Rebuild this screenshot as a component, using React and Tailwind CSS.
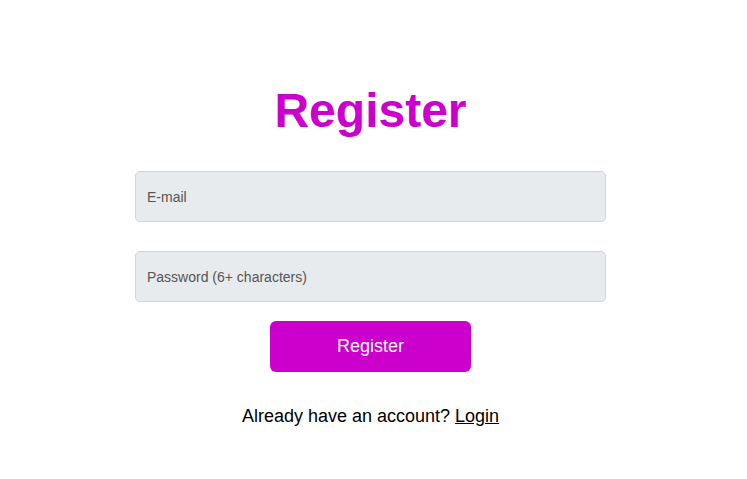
export default function App() {
  return (
    <div className="min-h-[479px] w-full bg-white" style={{ fontFamily: '"Liberation Sans", Arial, sans-serif' }}>
      <div className="ml-[135px] flex w-[471px] flex-col items-center pt-[87px]">
        <h1 className="text-[48px] font-bold leading-[48px] text-[#cc00cc]">Register</h1>
        <input
          type="email"
          placeholder="E-mail"
          className="mt-[36px] h-[51px] w-full rounded-[5px] border border-[#ced4da] bg-[#e8ebee] px-[11px] text-[14px] text-[#333] outline-none placeholder:text-[#555]"
        />
        <input
          type="password"
          placeholder="Password (6+ characters)"
          className="mt-[29px] h-[51px] w-full rounded-[5px] border border-[#ced4da] bg-[#e8ebee] px-[11px] text-[14px] text-[#333] outline-none placeholder:text-[#555]"
        />
        <button className="mt-[19px] h-[51px] w-[201px] rounded-[6px] bg-[#cc00cc] text-[18px] text-white">
          Register
        </button>
        <p className="mt-[31px] text-[18px] leading-[27px] text-black">
          Already have an account? <a href="#" className="underline">Login</a>
        </p>
      </div>
    </div>
  );
}
